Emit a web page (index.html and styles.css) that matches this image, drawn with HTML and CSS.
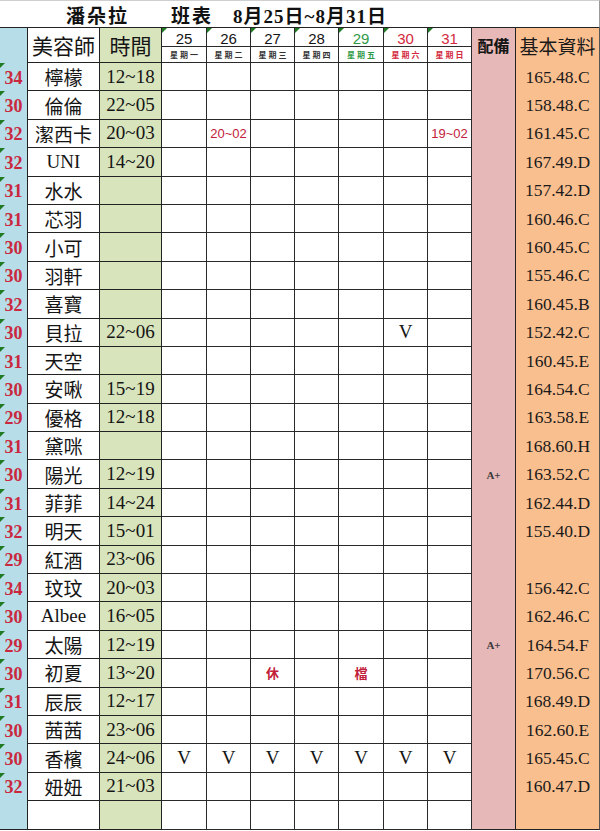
FILE: index.html
```html
<!DOCTYPE html>
<html lang="zh-Hant">
<head>
<meta charset="utf-8">
<title>潘朵拉 班表</title>
<link rel="stylesheet" href="styles.css">
</head>
<body>
<div class="sheet">
  <div class="title"><span class="t1">潘朵拉</span><span class="t2">班表</span><span class="t3">8月25日~8月31日</span></div>
  <div class="head">
    <div class="no hno"></div>
    <div class="nm hnm">美容師</div>
    <div class="tm htm">時間</div>
    <div class="dh"><div class="dn">25</div><div class="dw">星期一</div></div>
    <div class="dh"><div class="dn">26</div><div class="dw">星期二</div></div>
    <div class="dh"><div class="dn">27</div><div class="dw">星期三</div></div>
    <div class="dh"><div class="dn">28</div><div class="dw">星期四</div></div>
    <div class="dh green"><div class="dn">29</div><div class="dw">星期五</div></div>
    <div class="dh red"><div class="dn">30</div><div class="dw">星期六</div></div>
    <div class="dh red"><div class="dn">31</div><div class="dw">星期日</div></div>
    <div class="eq heq">配備</div>
    <div class="info hinfo">基本資料</div>
  </div>

  <div class="row"><div class="no">34</div><div class="nm">檸檬</div><div class="tm">12~18</div><div class="d"></div><div class="d"></div><div class="d"></div><div class="d"></div><div class="d"></div><div class="d"></div><div class="d"></div><div class="eq"></div><div class="info">165.48.C</div></div>
  <div class="row"><div class="no">30</div><div class="nm">倫倫</div><div class="tm">22~05</div><div class="d"></div><div class="d"></div><div class="d"></div><div class="d"></div><div class="d"></div><div class="d"></div><div class="d"></div><div class="eq"></div><div class="info">158.48.C</div></div>
  <div class="row"><div class="no">32</div><div class="nm">潔西卡</div><div class="tm">20~03</div><div class="d"></div><div class="d note">20~02</div><div class="d"></div><div class="d"></div><div class="d"></div><div class="d"></div><div class="d note">19~02</div><div class="eq"></div><div class="info">161.45.C</div></div>
  <div class="row"><div class="no">32</div><div class="nm">UNI</div><div class="tm">14~20</div><div class="d"></div><div class="d"></div><div class="d"></div><div class="d"></div><div class="d"></div><div class="d"></div><div class="d"></div><div class="eq"></div><div class="info">167.49.D</div></div>
  <div class="row"><div class="no">31</div><div class="nm">水水</div><div class="tm"></div><div class="d"></div><div class="d"></div><div class="d"></div><div class="d"></div><div class="d"></div><div class="d"></div><div class="d"></div><div class="eq"></div><div class="info">157.42.D</div></div>
  <div class="row"><div class="no">31</div><div class="nm">芯羽</div><div class="tm"></div><div class="d"></div><div class="d"></div><div class="d"></div><div class="d"></div><div class="d"></div><div class="d"></div><div class="d"></div><div class="eq"></div><div class="info">160.46.C</div></div>
  <div class="row"><div class="no">30</div><div class="nm">小可</div><div class="tm"></div><div class="d"></div><div class="d"></div><div class="d"></div><div class="d"></div><div class="d"></div><div class="d"></div><div class="d"></div><div class="eq"></div><div class="info">160.45.C</div></div>
  <div class="row"><div class="no">30</div><div class="nm">羽軒</div><div class="tm"></div><div class="d"></div><div class="d"></div><div class="d"></div><div class="d"></div><div class="d"></div><div class="d"></div><div class="d"></div><div class="eq"></div><div class="info">155.46.C</div></div>
  <div class="row"><div class="no">32</div><div class="nm">喜寶</div><div class="tm"></div><div class="d"></div><div class="d"></div><div class="d"></div><div class="d"></div><div class="d"></div><div class="d"></div><div class="d"></div><div class="eq"></div><div class="info">160.45.B</div></div>
  <div class="row"><div class="no">30</div><div class="nm">貝拉</div><div class="tm">22~06</div><div class="d"></div><div class="d"></div><div class="d"></div><div class="d"></div><div class="d"></div><div class="d v">V</div><div class="d"></div><div class="eq"></div><div class="info">152.42.C</div></div>
  <div class="row"><div class="no">31</div><div class="nm">天空</div><div class="tm"></div><div class="d"></div><div class="d"></div><div class="d"></div><div class="d"></div><div class="d"></div><div class="d"></div><div class="d"></div><div class="eq"></div><div class="info">160.45.E</div></div>
  <div class="row"><div class="no">30</div><div class="nm">安啾</div><div class="tm">15~19</div><div class="d"></div><div class="d"></div><div class="d"></div><div class="d"></div><div class="d"></div><div class="d"></div><div class="d"></div><div class="eq"></div><div class="info">164.54.C</div></div>
  <div class="row"><div class="no">29</div><div class="nm">優格</div><div class="tm">12~18</div><div class="d"></div><div class="d"></div><div class="d"></div><div class="d"></div><div class="d"></div><div class="d"></div><div class="d"></div><div class="eq"></div><div class="info">163.58.E</div></div>
  <div class="row"><div class="no">31</div><div class="nm">黛咪</div><div class="tm"></div><div class="d"></div><div class="d"></div><div class="d"></div><div class="d"></div><div class="d"></div><div class="d"></div><div class="d"></div><div class="eq"></div><div class="info">168.60.H</div></div>
  <div class="row"><div class="no">30</div><div class="nm">陽光</div><div class="tm">12~19</div><div class="d"></div><div class="d"></div><div class="d"></div><div class="d"></div><div class="d"></div><div class="d"></div><div class="d"></div><div class="eq grade">A+</div><div class="info">163.52.C</div></div>
  <div class="row"><div class="no">31</div><div class="nm">菲菲</div><div class="tm">14~24</div><div class="d"></div><div class="d"></div><div class="d"></div><div class="d"></div><div class="d"></div><div class="d"></div><div class="d"></div><div class="eq"></div><div class="info">162.44.D</div></div>
  <div class="row"><div class="no">32</div><div class="nm">明天</div><div class="tm">15~01</div><div class="d"></div><div class="d"></div><div class="d"></div><div class="d"></div><div class="d"></div><div class="d"></div><div class="d"></div><div class="eq"></div><div class="info">155.40.D</div></div>
  <div class="row"><div class="no">29</div><div class="nm">紅酒</div><div class="tm">23~06</div><div class="d"></div><div class="d"></div><div class="d"></div><div class="d"></div><div class="d"></div><div class="d"></div><div class="d"></div><div class="eq"></div><div class="info"></div></div>
  <div class="row"><div class="no">34</div><div class="nm">玟玟</div><div class="tm">20~03</div><div class="d"></div><div class="d"></div><div class="d"></div><div class="d"></div><div class="d"></div><div class="d"></div><div class="d"></div><div class="eq"></div><div class="info">156.42.C</div></div>
  <div class="row"><div class="no">30</div><div class="nm">Albee</div><div class="tm">16~05</div><div class="d"></div><div class="d"></div><div class="d"></div><div class="d"></div><div class="d"></div><div class="d"></div><div class="d"></div><div class="eq"></div><div class="info">162.46.C</div></div>
  <div class="row"><div class="no">29</div><div class="nm">太陽</div><div class="tm">12~19</div><div class="d"></div><div class="d"></div><div class="d"></div><div class="d"></div><div class="d"></div><div class="d"></div><div class="d"></div><div class="eq grade">A+</div><div class="info">164.54.F</div></div>
  <div class="row"><div class="no">30</div><div class="nm">初夏</div><div class="tm">13~20</div><div class="d"></div><div class="d"></div><div class="d off">休</div><div class="d"></div><div class="d off">檔</div><div class="d"></div><div class="d"></div><div class="eq"></div><div class="info">170.56.C</div></div>
  <div class="row"><div class="no">31</div><div class="nm">辰辰</div><div class="tm">12~17</div><div class="d"></div><div class="d"></div><div class="d"></div><div class="d"></div><div class="d"></div><div class="d"></div><div class="d"></div><div class="eq"></div><div class="info">168.49.D</div></div>
  <div class="row"><div class="no">30</div><div class="nm">茜茜</div><div class="tm">23~06</div><div class="d"></div><div class="d"></div><div class="d"></div><div class="d"></div><div class="d"></div><div class="d"></div><div class="d"></div><div class="eq"></div><div class="info">162.60.E</div></div>
  <div class="row"><div class="no">30</div><div class="nm">香檳</div><div class="tm">24~06</div><div class="d v">V</div><div class="d v">V</div><div class="d v">V</div><div class="d v">V</div><div class="d v">V</div><div class="d v">V</div><div class="d v">V</div><div class="eq"></div><div class="info">165.45.C</div></div>
  <div class="row"><div class="no">32</div><div class="nm">妞妞</div><div class="tm">21~03</div><div class="d"></div><div class="d"></div><div class="d"></div><div class="d"></div><div class="d"></div><div class="d"></div><div class="d"></div><div class="eq"></div><div class="info">160.47.D</div></div>
  <div class="row last"><div class="no empty"></div><div class="nm"></div><div class="tm"></div><div class="d"></div><div class="d"></div><div class="d"></div><div class="d"></div><div class="d"></div><div class="d"></div><div class="d"></div><div class="eq"></div><div class="info"></div></div>
</div>
</body>
</html>
```

FILE: styles.css
```css
* {
  box-sizing: border-box;
}

body {
  margin: 0;
  background: #ffffff;
  color: #151515;
  font-family: "Liberation Serif", "Noto Sans CJK TC", serif;
}

.sheet {
  width: 600px;
}

.title {
  height: 28px;
  border-top: 1px solid #cfcfcf;
  border-right: 1px solid #9a9a9a;
  border-bottom: 1px solid #222;
  display: flex;
  align-items: center;
  padding-left: 66px;
  font-size: 19px;
  font-weight: bold;
  color: #111;
}

.t1 {
  letter-spacing: 2px;
}

.t2 {
  margin-left: 42px;
  letter-spacing: 2px;
}

.t3 {
  margin-left: 20px;
  letter-spacing: 1px;
}

.head,
.row {
  display: grid;
  grid-template-columns: 28px 72px 62px 45px 44px 44px 44px 45px 44px 44px 44px 84px;
  width: 600px;
}

.head {
  height: 35px;
}

.row {
  height: 28.4px;
}

.head > div,
.row > div {
  display: flex;
  align-items: center;
  justify-content: center;
  white-space: nowrap;
}

/* left index column */
.no {
  position: relative;
  background: #b7dde8;
  border-right: 1px solid #222;
  color: #c9283e;
  font-weight: bold;
  font-size: 18px;
  padding-top: 2px;
}

.row .no::before {
  content: "";
  position: absolute;
  top: 0;
  left: 0;
  border-top: 5px solid #1f7a23;
  border-right: 5px solid transparent;
}

.row .no.empty::before {
  display: none;
}

.nm {
  border-right: 1px solid #222;
  border-bottom: 1px solid #222;
  font-size: 19px;
  color: #151515;
}

.tm {
  background: #d8e4bc;
  border-right: 1px solid #222;
  border-bottom: 1px solid #222;
  font-size: 19px;
  color: #151515;
}

.d {
  border-right: 1px solid #2a2a2a;
  border-bottom: 1px solid #2a2a2a;
}

.eq {
  background: #e6b8b7;
  border-right: 1px solid #222;
}

.info {
  background: #fabf8f;
  border-right: 1px solid #555;
  font-size: 17.5px;
  color: #1a1a1a;
}

.last .no,
.last .eq,
.last .info {
  border-bottom: 1px solid #222;
}

/* header cells */
.hnm {
  font-size: 21px;
}

.htm {
  font-size: 21px;
}

.heq {
  font-size: 16px;
  font-weight: bold;
  padding-bottom: 2px;
}

.hinfo {
  font-size: 19px;
}

.head .dh {
  position: relative;
  flex-direction: column;
  align-items: stretch;
  justify-content: flex-start;
  border-right: 1px solid #2a2a2a;
  border-bottom: 1px solid #2a2a2a;
}

.dh::before {
  content: "";
  position: absolute;
  top: 0;
  left: 0;
  border-top: 5px solid #1f7a23;
  border-right: 5px solid transparent;
}

.dn {
  height: 19px;
  border-bottom: 1px solid #2a2a2a;
  display: flex;
  align-items: center;
  justify-content: center;
  font-family: "Liberation Sans", Arial, sans-serif;
  font-size: 15px;
  padding-top: 2px;
  color: #151515;
}

.dw {
  flex: 1;
  display: flex;
  align-items: center;
  justify-content: center;
  font-family: "Noto Sans CJK TC", sans-serif;
  font-size: 8px;
  font-weight: bold;
  letter-spacing: 2px;
  padding-left: 2px;
  color: #333;
}

.green .dn,
.green .dw {
  color: #2f9a48;
}

.red .dn,
.red .dw {
  color: #d3283d;
}

/* cell contents */
.note {
  font-family: "Liberation Sans", Arial, sans-serif;
  font-size: 13px;
  color: #c2203a;
}

.v {
  font-size: 19px;
  color: #151515;
}

.off {
  font-family: "Noto Sans CJK TC", sans-serif;
  font-size: 13px;
  font-weight: bold;
  color: #c2203a;
}

.grade {
  font-size: 11px;
  font-weight: bold;
  color: #3a3a3a;
}
```
